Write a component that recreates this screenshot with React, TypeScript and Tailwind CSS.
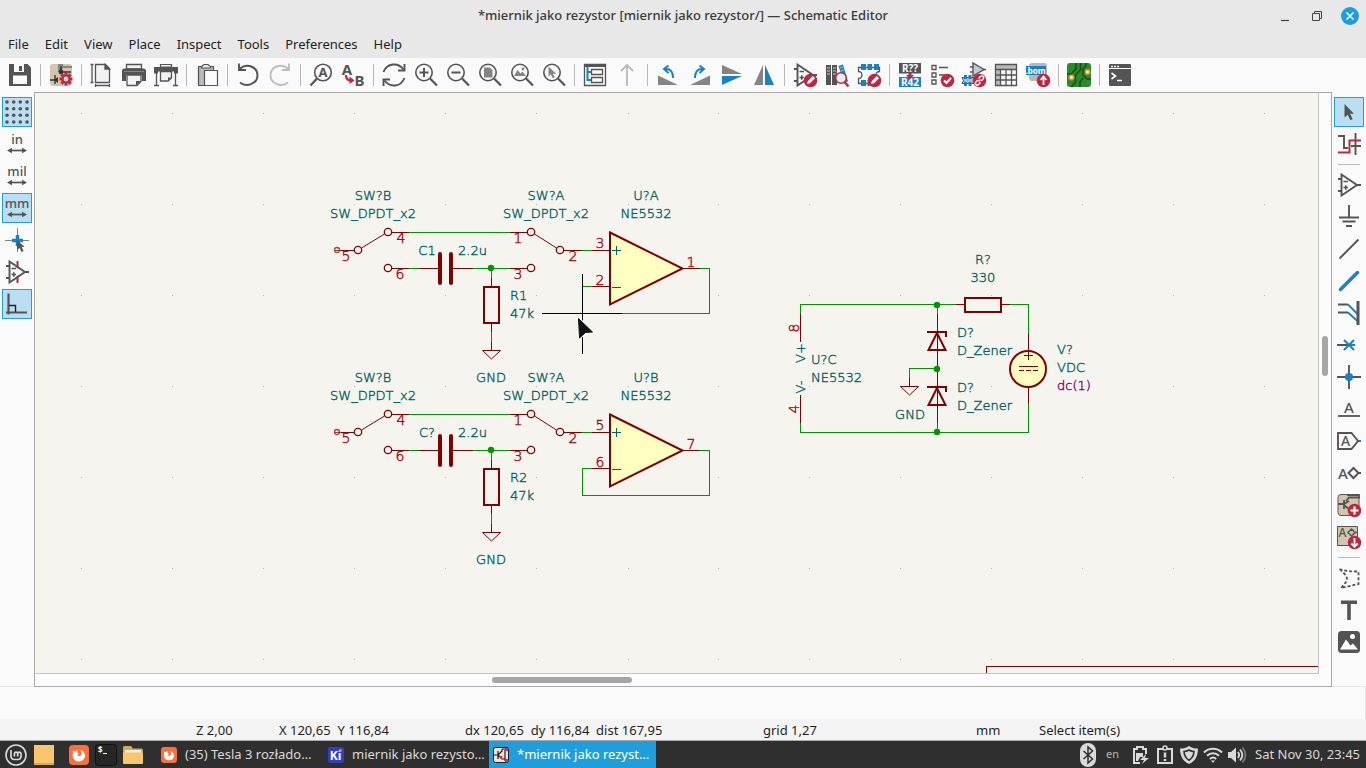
import React from 'react'

const DARK = '#545454'
const BLUE = '#1a81c4'
const RED = '#bf2641'
const GREY = '#b9b9b9'
const MID = '#848484'

type Tool = {
  label: string
  icon: React.ReactNode
  active?: boolean
}

const menus = ['File', 'Edit', 'View', 'Place', 'Inspect', 'Tools', 'Preferences', 'Help']

// === ICON PIECES ===
const Lens = () => (
  <>
    <circle cx="10" cy="9.5" r="8.2" fill="none" stroke={DARK} strokeWidth="1.6" />
    <path d="M16 15.5l7 7" stroke={DARK} strokeWidth="2.2" />
  </>
)

const Badge = ({ children }: { children: React.ReactNode }) => (
  <>
    <circle cx="17.5" cy="17.5" r="6.8" fill={RED} />
    <g fill="none" stroke="#fff" strokeWidth="1.8">{children}</g>
  </>
)

const Pencil = () => (
  <Badge>
    <path d="M14 21l.8-3 5-5 2.200 2.200-5 5z" fill="#fff" stroke="none" />
  </Badge>
)

const OpAmp = () => (
  <g fill="none" stroke={DARK} strokeWidth="1.9">
    <path d="M4.5 1.5v21L20 12z" />
    <path d="M1 6h3.500M1 18h3.500M19.500 12H24" />
    <path d="M6.500 8.500h4.500M6.500 14.500h4.500M8.750 12.200v4.600" strokeWidth="1.600" />
  </g>
)

const Unit = ({ text }: { text: string }) => (
  <>
    <text x="12" y="12" textAnchor="middle" fontSize="13" fontWeight="500" fill={DARK}>{text}</text>
    <path d="M4 18.500h16" stroke={DARK} strokeWidth="1.700" />
    <path d="M2 18.500l5-2.800v5.600zM22 18.500l-5-2.800v5.600z" fill={DARK} />
  </>
)

const gear = (
  <>
    <g stroke={RED} strokeWidth="3">
      <path d="M17 9.500v13M10.500 16h13M12.400 11.400l9.200 9.200M21.600 11.400l-9.200 9.200" />
    </g>
    <circle cx="17" cy="16" r="4.400" fill={RED} />
    <circle cx="17" cy="16" r="2.400" fill="#e6dccb" />
  </>
)

const topGroups: Tool[][] = [
  [
    {
      label: 'Save',
      icon: (
        <>
          <path d="M1 1h18.500L23 4.500V23H1z" fill={DARK} />
          <path d="M6 1h10v8H6z" fill="#fafafa" />
          <path d="M11 3h3v5h-3z" fill={DARK} />
          <path d="M5 12.500h14V21H5z" fill="#fafafa" />
        </>
      ),
    },
  ],
  [
    {
      label: 'Schematic Setup',
      icon: (
        <>
          <rect x="1" y="1" width="22" height="22" rx="3" fill="#d2c5ac" />
          <path d="M9 1h5v2h9v2h-9L12 9H9z" fill={MID} />
          <path d="M12 3v6h10M1 17h8M6 12v9" fill="none" stroke="#333" strokeWidth="1.400" />
          <circle cx="12" cy="9" r="2.400" fill="#333" />
          <path d="M5 17l4-3v6z" fill="#333" />
          {gear}
        </>
      ),
    },
  ],
  [
    {
      label: 'Page Settings',
      icon: (
        <g fill="none" stroke={DARK} strokeWidth="1.300">
          <path d="M5.500 1.500h10l4 4V19.500h-14z" fill="#f3f3f3" />
          <path d="M15 1.500v4.500h4.500z" fill={DARK} />
          <path d="M.500 1.500h3M.500 19.500h3M2 1.500v18M5.500 21v3M19.500 21v3M5.500 22.500h14" />
        </g>
      ),
    },
    {
      label: 'Print',
      icon: (
        <>
          <path d="M4.500 1.500h15V6h-15z" fill="#f3f3f3" stroke={DARK} strokeWidth="1.300" />
          <path d="M2.500 5.500h19a2.500 2.500 0 012.500 2.500v10h-4v-6H4v6H0V8a2.500 2.500 0 012.500-2.500z" fill={DARK} />
          <path d="M2 8.500h20" stroke={MID} />
          <path d="M5 12h14v6.500l-4 4H5z" fill="#f3f3f3" stroke={DARK} strokeWidth="1.300" />
          <path d="M14 22.500V18h5z" fill={DARK} />
        </>
      ),
    },
    {
      label: 'Plot',
      icon: (
        <>
          <path d="M6.500 1.500h11V4h-11z" fill="#f3f3f3" stroke={DARK} strokeWidth="1.200" />
          <path d="M0 4h24v6.500h-4v-2H4v2H0z" fill={DARK} />
          <path d="M2.500 10v12M21.500 10v12M0 22.500h5M19 22.500h5" stroke={DARK} strokeWidth="1.300" />
          <path d="M6.500 8.500h11V15L14 18H6.500z" fill="#f3f3f3" stroke={DARK} strokeWidth="1.300" />
          <path d="M14 18v-3.500h3.500z" fill={DARK} />
        </>
      ),
    },
  ],
  [
    {
      label: 'Paste',
      icon: (
        <g stroke={DARK} strokeWidth="1.200">
          <path d="M3.500 3.500h15v19h-15z" fill={GREY} />
          <path d="M6.500 3.500L9 1.500h4l2.500 2V5h-9z" fill="#e8e8e8" />
          <path d="M9.500 7.500h13v15h-13z" fill="#fafafa" />
        </g>
      ),
    },
  ],
  [
    {
      label: 'Undo',
      icon: (
        <g fill="none" stroke={DARK} strokeWidth="1.900">
          <path d="M3 6.500C11-1 21.500 4 21.500 12.500S10 24.500 4 19.500" />
          <path d="M3 .500v6.500h7" />
        </g>
      ),
    },
    {
      label: 'Redo',
      icon: (
        <g fill="none" stroke="#bdbdbd" strokeWidth="1.900">
          <path d="M21 6.500C13-1 2.500 4 2.500 12.500S14 24.500 20 19.500" />
          <path d="M21 .500v6.500h-7" />
        </g>
      ),
    },
  ],
  [
    {
      label: 'Find',
      icon: (
        <>
          <circle cx="14" cy="9.500" r="8.300" fill="none" stroke={DARK} strokeWidth="1.600" />
          <path d="M8 15.500L1.500 22.500" stroke={DARK} strokeWidth="2.200" />
          <text x="14" y="14" textAnchor="middle" fontSize="13" fontWeight="700" fill={DARK}>A</text>
        </>
      ),
    },
    {
      label: 'Find and Replace',
      icon: (
        <>
          <text x="6" y="11.500" textAnchor="middle" fontSize="15" fontWeight="700" fill={DARK}>A</text>
          <text x="18.500" y="23" textAnchor="middle" fontSize="15" fontWeight="700" fill={DARK}>B</text>
          <path d="M5 12c0 4 2 5.500 5 5.500" fill="none" stroke={RED} strokeWidth="2.200" />
          <path d="M8.500 13.500l5 4-5 3.500z" fill={RED} />
        </>
      ),
    },
  ],
  [
    {
      label: 'Refresh',
      icon: (
        <g fill="none" stroke={DARK} strokeWidth="1.900">
          <path d="M1.500 9C5 0 16-1 21.500 6.500M22.500 15C19 24 8 25 2.500 17.500" />
          <path d="M22.500 1v6.500H16M1.500 23v-6.500H8" />
        </g>
      ),
    },
    { label: 'Zoom In', icon: <><Lens /><path d="M5.500 9.500h9M10 5v9" stroke={DARK} strokeWidth="2" /></> },
    { label: 'Zoom Out', icon: <><Lens /><path d="M5.500 9.500h9" stroke={DARK} strokeWidth="2" /></> },
    { label: 'Zoom to Fit', icon: <><Lens /><path d="M6 4.500h6l2.500 2.500v7.500H6z" fill={MID} /></> },
    {
      label: 'Zoom to Objects',
      icon: <><Lens /><path d="M4 13l3.500-6 3 3.500 2-2L16 13z" fill={MID} /><circle cx="13" cy="6" r="1.400" fill={MID} /></>,
    },
    { label: 'Zoom to Selection', icon: <><Lens /><path d="M6.500 3.500v10l2.400-2.200 1.800 4 2-1-1.800-3.600h3.200z" fill={MID} /></> },
  ],
  [
    {
      label: 'Hierarchy Navigator',
      icon: (
        <g fill="none" stroke={DARK} strokeWidth="1.300">
          <path d="M1.500 1.500h21v21h-21z" />
          <path d="M1 2.500h22" strokeWidth="3" />
          <path d="M8.500 6.500h11v5h-11zM8.500 14.500h11v5h-11z" />
          <path d="M4.500 4v13H8M4.500 9H8" stroke={BLUE} strokeWidth="2" />
        </g>
      ),
    },
    {
      label: 'Leave Sheet',
      icon: <path d="M12 23V2.500M6 8l6-6 6 6" fill="none" stroke={GREY} strokeWidth="1.800" />,
    },
  ],
  [
    {
      label: 'Rotate Counterclockwise',
      icon: (
        <>
          <path d="M2 12.500V22h20z" fill={MID} />
          <path d="M9 6c6-.5 8 3 8 9" fill="none" stroke={BLUE} strokeWidth="2" />
          <path d="M12.500 2.500L8 6l4.500 4" fill="none" stroke={BLUE} strokeWidth="2" />
        </>
      ),
    },
    {
      label: 'Rotate Clockwise',
      icon: (
        <>
          <path d="M22 12.500V22H2z" fill={MID} />
          <path d="M15 6c-6-.5-8 3-8 9" fill="none" stroke={BLUE} strokeWidth="2" />
          <path d="M11.500 2.500L16 6l-4.500 4" fill="none" stroke={BLUE} strokeWidth="2" />
        </>
      ),
    },
    { label: 'Mirror Vertically', icon: <><path d="M2 2v9h20z" fill={MID} /><path d="M2 22v-9h20z" fill={BLUE} /></> },
    { label: 'Mirror Horizontally', icon: <><path d="M11 2v20H2z" fill={MID} /><path d="M13 2v20h9z" fill={BLUE} /></> },
  ],
  [
    { label: 'Symbol Editor', icon: <><OpAmp /><Pencil /></> },
    {
      label: 'Symbol Library Browser',
      icon: (
        <>
          <path d="M1 2h5v20H1zM7 2h5v20H7z" fill={DARK} />
          <path d="M2 5h3M8 5h3M2 8h3M8 8h3M2 11h3M8 11h3" stroke="#ccc" />
          <path d="M13.500 3l4.500-1.500 5 17-4 1z" fill={BLUE} />
          <path d="M15 5l3-1M16 8l3-1" stroke="#9cc8e6" />
          <circle cx="16" cy="15" r="5.300" fill="#e4eef5" stroke={RED} strokeWidth="1.500" />
          <path d="M19.500 19l4 4.500" stroke={RED} strokeWidth="2.600" />
        </>
      ),
    },
    {
      label: 'Footprint Editor',
      icon: (
        <>
          <path d="M1.500 4.500h21v4a3.500 3.500 0 000 7v5h-21v-5a3.500 3.500 0 000-7z" fill="none" stroke={DARK} strokeWidth="1.300" />
          <path d="M4 1h5v6H4zM10.500 1h4.500v6h-4.500zM17 1h5v6h-5zM4 17h5v6H4zM10.500 17H15v6h-4.500z" fill={BLUE} />
          <Pencil />
        </>
      ),
    },
  ],
  [
    {
      label: 'Annotate Schematic',
      icon: (
        <>
          <path d="M1 0h22v10.500H1z" fill={DARK} />
          <path d="M1 14h22v10H1z" fill={BLUE} />
          <text x="12" y="9" textAnchor="middle" fontSize="10" fontWeight="700" fill="#fff">R??</text>
          <text x="12" y="23" textAnchor="middle" fontSize="10" fontWeight="700" fill="#fff">R42</text>
          <path d="M10.500 10h3v2h2.500l-4 4.500-4-4.500h2.500z" fill={RED} />
        </>
      ),
    },
    {
      label: 'Electrical Rules Checker',
      icon: (
        <>
          <path d="M2 2.500h4v4H2zM2 10h4v4H2zM2 17h4v4H2zM9 4.500h9M9 12h6" fill="none" stroke={DARK} strokeWidth="1.300" />
          <Badge><path d="M14 17.500l2.500 2.500 4.500-5" strokeWidth="2.200" /></Badge>
        </>
      ),
    },
    {
      label: 'Assign Footprints',
      icon: (
        <>
          <path d="M11 0v13l11-6.500z" fill="#bccbd8" stroke={DARK} strokeWidth="1.400" />
          <path d="M8 4h3M8 9h3M21 6.500h3" stroke={DARK} strokeWidth="1.400" />
          <path d="M0 14.500h15v6H0l1.500-3z" fill={GREY} stroke={DARK} />
          <path d="M2 12h3v4H2zM6.500 12h3v4h-3zM2 19h3v4H2zM6.500 19h3v4h-3z" fill={BLUE} />
          <Badge>
            <path d="M16.500 18.500l2-2M16.500 15.500l2-2a1.800 1.800 0 012.600 2.600l-2 2M18.500 19.500l-2 2a1.800 1.800 0 01-2.600-2.600l2-2" strokeWidth="1.400" />
          </Badge>
        </>
      ),
    },
    {
      label: 'Symbol Fields Table',
      icon: (
        <>
          <path d="M1 1.500h22V7H1zM1 7h5v15.500H1z" fill={GREY} />
          <path d="M1.500 1.500h21v21h-21zM1.500 6.500h21M1.500 12h21M1.500 17h21M6.500 6.500v16M12 6.500v16M17.500 6.500v16" fill="none" stroke={DARK} strokeWidth="1.300" />
        </>
      ),
    },
    {
      label: 'Bill of Materials',
      icon: (
        <>
          <rect x="3" y="0" width="18" height="18" rx="3" fill={GREY} />
          <path d="M0 3h20v9H0z" fill={BLUE} />
          <text x="9.500" y="10.500" textAnchor="middle" fontSize="8" fontWeight="700" fill="#fff">.bom</text>
          <Badge><path d="M17.500 22v-8M14.500 17l3-3.300 3 3.300" /></Badge>
        </>
      ),
    },
  ],
  [
    {
      label: 'Open PCB Editor',
      icon: (
        <>
          <rect width="24" height="24" rx="3" fill="#2b8a2b" />
          <g fill="none" stroke="#145214" strokeWidth="1.600">
            <path d="M9 0v6L4 11H0M13.500 0v7l-5 5v7l-4 5M19 0v3l-3 3v6l4 4h4M13 24v-5l3-4" />
          </g>
          <circle cx="4.500" cy="14.500" r="2.200" fill="#fff" stroke="#f08c1c" strokeWidth="1.600" />
          <circle cx="20.500" cy="9" r="2.200" fill="#fff" stroke="#f08c1c" strokeWidth="1.600" />
        </>
      ),
    },
  ],
  [
    {
      label: 'Scripting Console',
      icon: (
        <>
          <rect x="1" y="1" width="22" height="22" rx="1" fill={DARK} />
          <path d="M1 5.500h22" stroke="#fafafa" />
          <path d="M3 3.500h2M6 3.500h2M9 3.500h2" stroke="#eee" strokeWidth="1.500" />
          <path d="M3.500 10l4 3-4 3M9 17.500h5" fill="none" stroke="#fff" strokeWidth="1.600" />
        </>
      ),
    },
  ],
]

const leftTools: Tool[] = [
  {
    label: 'Show Grid',
    active: true,
    icon: (
      <g fill={DARK}>
        {[2, 8.7, 15.3, 22].map((x) =>
          [2, 8.7, 15.3, 22].map((y) => <circle key={`${x}-${y}`} cx={x} cy={y} r="1.800" />)
        )}
      </g>
    ),
  },
  { label: 'Inches', icon: <Unit text="in" /> },
  { label: 'Mils', icon: <Unit text="mil" /> },
  { label: 'Millimeters', active: true, icon: <Unit text="mm" /> },
  {
    label: 'Full-Window Crosshairs',
    icon: (
      <>
        <path d="M12.500 0v24M0 12.500h24" stroke={MID} />
        <path d="M12.500 7v11M7 12.500h11" stroke={BLUE} strokeWidth="3.500" />
        <path d="M12 12v10l2.600-2 2 4 2-1-2-4h3z" fill={DARK} />
      </>
    ),
  },
  { label: 'Show Hidden Pins', icon: <><path d="M12.500 1v22" stroke={RED} strokeWidth="2" /><path d="M5 4l14 8-14 8z" fill="#fafafa" /><OpAmp /></> },
  {
    label: 'Free Angle Mode',
    active: true,
    icon: (
      <>
        <path d="M3.500 1.500v21M1 20.500h21" stroke={DARK} strokeWidth="2.200" />
        <path d="M4 13.500h6.500V20" fill="none" stroke="#222" strokeWidth="1.400" />
      </>
    ),
  },
]

const rightGroups: Tool[][] = [
  [
    {
      label: 'Select Items',
      active: true,
      icon: <path d="M7.500 4v13.500l3.200-2.700 2.600 5.400 2.400-1.200-2.600-5.200H17z" fill={DARK} />,
    },
    {
      label: 'Highlight Nets',
      icon: (
        <g fill="none" strokeWidth="1.900">
          <path d="M1 4h6v12h4M18.500 1v22M14 14h10" stroke={DARK} />
          <path d="M1 20.500h11.500v-12H24" stroke={RED} strokeWidth="2" />
        </g>
      ),
    },
  ],
  [
    { label: 'Add Symbol', icon: <OpAmp /> },
    { label: 'Add Power', icon: <path d="M12 0v12M2 12.500h20M5.500 16.500h13M9 21h6" stroke={DARK} strokeWidth="1.900" /> },
    { label: 'Draw Wires', icon: <path d="M2.500 21.500l19-19" stroke={DARK} strokeWidth="1.900" /> },
    { label: 'Draw Buses', icon: <path d="M3.500 20.500l17-17" stroke={BLUE} strokeWidth="3.500" strokeLinecap="round" /> },
    {
      label: 'Wire to Bus Entry',
      icon: (
        <g fill="none" strokeWidth="1.900">
          <path d="M1 3.500h10M1 11.500h10" stroke={DARK} />
          <path d="M11 3.500l10 10M11 11.500l10 9" stroke={BLUE} />
          <path d="M21 0v24" stroke={DARK} strokeWidth="3" />
        </g>
      ),
    },
    { label: 'No-Connect Flag', icon: <><path d="M0 12h12" stroke={DARK} strokeWidth="2" /><path d="M7 7l10 10M17 7L7 17M12 12h6" stroke={BLUE} strokeWidth="2" /></> },
    { label: 'Junction', icon: <><path d="M0 12h24M12 0v24" stroke={DARK} strokeWidth="1.900" /><circle cx="12" cy="12" r="4" fill={BLUE} /></> },
    {
      label: 'Net Label',
      icon: <><text x="12" y="16" textAnchor="middle" fontSize="15" fontWeight="500" fill={DARK}>A</text><path d="M1 19h22" stroke={DARK} strokeWidth="1.800" /></>,
    },
    {
      label: 'Global Label',
      icon: (
        <>
          <path d="M21 12h3" stroke={BLUE} strokeWidth="2" />
          <path d="M1 4h13.500l6.500 8-6.500 8H1z" fill="none" stroke={DARK} strokeWidth="1.900" />
          <text x="8.500" y="17" textAnchor="middle" fontSize="14" fontWeight="500" fill={DARK}>A</text>
        </>
      ),
    },
    {
      label: 'Hierarchical Label',
      icon: <><text x="6" y="17.500" textAnchor="middle" fontSize="15" fontWeight="500" fill={DARK}>A</text><path d="M11.500 12l5-5 5 5-5 5zM21.500 12H24" fill="none" stroke={DARK} strokeWidth="2" /></>,
    },
    {
      label: 'Add Sheet',
      icon: (
        <>
          <rect x="1" y="1.500" width="21" height="21" rx="3" fill="#d2c5ac" stroke={DARK} />
          <path d="M10 2h12v2.500H12L9 8M1 11h6M7 7v9M7 11l5-3M7 12l6 5" fill="none" stroke={DARK} strokeWidth="1.800" />
          <Badge><path d="M17.500 13.500v8M13.500 17.500h8" strokeWidth="2.200" /></Badge>
        </>
      ),
    },
    {
      label: 'Import Sheet Pin',
      icon: (
        <>
          <path d="M.500 1.500h20v19H.500z" fill="#d2c5ac" stroke={DARK} />
          <text x="5.500" y="12" textAnchor="middle" fontSize="12" fontWeight="500" fill={DARK}>A</text>
          <path d="M11 7.500l3.500-3.500 3.500 3.500-3.500 3.500zM18 7.500h2.500" fill="none" stroke={DARK} strokeWidth="1.500" />
          <Badge><path d="M17.500 13v8.500M14.300 18.500l3.200 3.200 3.200-3.200" /></Badge>
        </>
      ),
    },
  ],
  [
    {
      label: 'Draw Lines',
      icon: <path d="M2.500 3C8 5 14 5.500 21.500 5.500V18L4 22c4-5 6-6 6-9S6 6 2.500 3z" fill="none" stroke={DARK} strokeWidth="1.800" strokeDasharray="3 2" />,
    },
    { label: 'Add Text', icon: <path d="M4 2.500h16V6h-6.200v16h-3.600V6H4z" fill={DARK} /> },
    {
      label: 'Add Image',
      icon: (
        <>
          <rect x="1" y="1" width="22" height="22" rx="3.500" fill={DARK} />
          <path d="M3 19.500l6-10 4.500 6 2.500-2 5 6z" fill="#fff" />
          <circle cx="15.500" cy="6.500" r="2.500" fill="#fff" />
        </>
      ),
    },
  ],
]

const Icon = ({ children }: { children: React.ReactNode }) => (
  <svg viewBox="0 0 24 24" className="h-6 w-6 shrink-0 overflow-visible" aria-hidden="true">
    {children}
  </svg>
)

const SideButton = ({ tool }: { tool: Tool }) => (
  <button
    type="button"
    aria-label={tool.label}
    className={
      tool.active
        ? 'flex h-[30px] w-[30px] items-center justify-center border border-[#1f9ede] bg-[#bbdff2]'
        : 'flex h-[30px] w-[30px] items-center justify-center'
    }
  >
    <Icon>{tool.icon}</Icon>
  </button>
)

// === SCHEMATIC ===
const SYM = '#840000'
const WIRE = '#009600'
const LABEL = '#006464'
const PIN = '#a90000'

type LabelProps = {
  x: number
  y: number
  fill?: string
  anchor?: 'start' | 'middle'
  turned?: boolean
  children: string
}

const Label = ({ x, y, fill = LABEL, anchor = 'middle', turned, children }: LabelProps) => (
  <text
    x={x}
    y={y}
    fill={fill}
    stroke={fill}
    strokeWidth="0.400"
    textAnchor={anchor}
    transform={turned ? `rotate(-90 ${x} ${y})` : undefined}
  >
    {children}
  </text>
)

// Pin numbers sit a touch larger than the field labels
const PinNo = ({ x, y, turned, children }: LabelProps) => (
  <g className="text-[14px]">
    <Label x={x} y={y} fill={PIN} turned={turned}>{children}</Label>
  </g>
)

type ChannelProps = {
  dy: number
  unit: string
  cap: string
  res: string
  pins: [string, string, string]
}

// One switch + RC + follower channel
const Channel = ({ dy, unit, cap, res, pins }: ChannelProps) => (
  <g transform={`translate(0 ${dy})`}>
    <g fill="none" stroke={WIRE} shapeRendering="crispEdges">
      <path d="M409 232.500h101M409 268.500h10M473 268.500h37M491.500 268v10M491.500 332v10M582 250.500h10" />
      <path d="M700 268.500h9.500v45H582.500v-27h9.500" />
    </g>
    <g fill="none" stroke={SYM} shapeRendering="crispEdges">
      <path d="M392 232.500h17M510 232.500h17M341 250.500h13M392 268.500h17M419 268.500h20M453 268.500h20M510 268.500h17" />
      <path d="M491.500 278v8M491.500 324v8M491.500 342v8M564 250.500h18M592 250.500h17M592 286.500h17M684 268.500h16" />
    </g>
    <path d="M361.500 248L384.500 234M534.500 234L556.500 248M482.500 350.500h18l-9 8.500z" fill="none" stroke={SYM} />
    <g fill="none" stroke={SYM} strokeWidth="1.300">
      <circle cx="388" cy="232" r="3.700" />
      <circle cx="358" cy="250" r="3.700" />
      <circle cx="388" cy="268" r="3.700" />
      <circle cx="531" cy="232" r="3.700" />
      <circle cx="531" cy="268" r="3.700" />
      <circle cx="560" cy="250" r="3.700" />
      <circle cx="337" cy="250" r="2.500" opacity="0.700" />
      <path d="M335 250.500h6" strokeWidth="1" opacity="0.700" />
    </g>
    <path d="M440 254v29M451 254v29" stroke={SYM} strokeWidth="4" strokeLinecap="round" />
    <rect x="484" y="287" width="15" height="36" fill="none" stroke={SYM} strokeWidth="2" />
    <path d="M610 232.500l72.500 36-72.500 36z" fill="#ffffc2" stroke={SYM} strokeWidth="2" />
    <path d="M612 250.500h9M616.500 246v9M612 287.500h9" stroke={LABEL} />
    <circle cx="491" cy="268" r="3.200" fill={WIRE} />

    <Label x={373} y={200}>SW?B</Label>
    <Label x={373} y={218}>SW_DPDT_x2</Label>
    <Label x={546} y={200}>SW?A</Label>
    <Label x={546} y={218}>SW_DPDT_x2</Label>
    <Label x={646} y={200}>{unit}</Label>
    <Label x={646} y={218}>NE5532</Label>
    <Label x={427} y={255}>{cap}</Label>
    <Label x={458} y={255} anchor="start">2.2u</Label>
    <Label x={510} y={300} anchor="start">{res}</Label>
    <Label x={510} y={318} anchor="start">47k</Label>
    <Label x={491} y={382}>GND</Label>

    <PinNo x={401} y={243}>4</PinNo>
    <PinNo x={346} y={261}>5</PinNo>
    <PinNo x={400} y={279}>6</PinNo>
    <PinNo x={518} y={243}>1</PinNo>
    <PinNo x={573} y={261}>2</PinNo>
    <PinNo x={518} y={279}>3</PinNo>
    <PinNo x={600} y={248}>{pins[0]}</PinNo>
    <PinNo x={600} y={285}>{pins[1]}</PinNo>
    <PinNo x={691} y={267}>{pins[2]}</PinNo>
  </g>
)

const Zener = ({ dy }: { dy: number }) => (
  <g transform={`translate(0 ${dy})`}>
    <path d="M927 332h19v5M937 333l-8.500 17h17z" fill="none" stroke={SYM} strokeWidth="2" />
    <Label x={957} y={337} anchor="start">D?</Label>
    <Label x={957} y={355} anchor="start">D_Zener</Label>
  </g>
)

const gridX = [81, 172, 263, 354, 445, 536, 628, 718, 809, 900, 991, 1082, 1173, 1264]
const gridY = [113, 204, 295, 386, 477, 568, 659]

const Schematic = () => (
  <svg
    className="block h-full w-full text-[13px] font-extralight [font-family:'DejaVu_Sans',sans-serif]"
    role="img"
    aria-label="Schematic sheet"
  >
    <g transform="translate(-35 -93)">
      <g fill="#b4b4b0">
        {gridX.map((x) => gridY.map((y) => <rect key={`${x}-${y}`} x={x} y={y} width="1" height="1" />))}
      </g>

      <Channel dy={0} unit="U?A" cap="C1" res="R1" pins={['3', '2', '1']} />
      <Channel dy={182} unit="U?B" cap="C?" res="R2" pins={['5', '6', '7']} />

      {/* Supply */}
      <g fill="none" stroke={WIRE} shapeRendering="crispEdges">
        <path d="M800.500 314v-9.500H956M1010 304.500h18.500V333M1028.500 404v28.500H800.500V423" />
        <path d="M937.500 305v9M937.500 423v9M937 368.500h-27.500V378" />
      </g>
      <g fill="none" stroke={SYM} shapeRendering="crispEdges">
        <path d="M800.500 314v28M800.500 395v28M956 304.500h8M1002 304.500h8M1028.500 333v18M1028.500 387v17M937.500 314v109" />
        <path d="M909.500 378v8" />
      </g>
      <path d="M900.500 386.500h18l-9 8.500z" fill="none" stroke={SYM} />
      <rect x="965" y="298" width="36" height="14" fill="none" stroke={SYM} strokeWidth="2" />
      <Zener dy={0} />
      <Zener dy={55} />
      <circle cx="1028" cy="369" r="18" fill="#ffffc2" stroke={SYM} strokeWidth="2" />
      <path d="M1024 355.500h9M1028.500 350v10M1019 366.500h19M1019 370.500h5M1026 370.500h5M1033 370.500h5" stroke={SYM} />
      <g fill={WIRE}>
        <circle cx="937" cy="305" r="3.200" />
        <circle cx="937" cy="369" r="3.200" />
        <circle cx="937" cy="432" r="3.200" />
      </g>
      <Label x={983} y={264}>R?</Label>
      <Label x={983} y={282}>330</Label>
      <Label x={811} y={364} anchor="start">U?C</Label>
      <Label x={811} y={382} anchor="start">NE5532</Label>
      <Label x={1057} y={354} anchor="start">V?</Label>
      <Label x={1057} y={372} anchor="start">VDC</Label>
      <Label x={1057} y={390} anchor="start" fill="#7f007f">dc(1)</Label>
      <Label x={910} y={419}>GND</Label>
      <PinNo x={799} y={328} turned>8</PinNo>
      <PinNo x={799} y={409} turned>4</PinNo>
      <Label x={805} y={353} turned>V+</Label>
      <Label x={805} y={387} turned>V-</Label>

      {/* Sheet frame corner */}
      <path d="M986.500 4000V666.500H6000" fill="none" stroke={SYM} shapeRendering="crispEdges" />

      {/* Crosshair and pointer */}
      <path d="M542 313.500h80M582.500 274v80" stroke="#000" shapeRendering="crispEdges" />
      <path d="M578.500 318.500l14 13.500-7 .500-6 5.500z" fill="#111" stroke="#fff" strokeWidth="3" strokeLinejoin="round" />
      <path d="M578.500 318.500l14 13.500-7 .500-6 5.500z" fill="#111" stroke="#111" strokeLinejoin="round" />
    </g>
  </svg>
)

const Firefox = ({ className }: { className: string }) => (
  <svg viewBox="0 0 20 20" className={className} aria-hidden="true">
    <rect width="20" height="20" rx="4" fill="#f9703c" />
    <path d="M4 5.500c.8.200 1.400.6 2 1.200 1-1 2.200-1.400 3-1.400-1 .8-1.300 1.500-1 2.200l2 .8c-.4 1-1.300 1.200-1.800 1.500.3 1.500 3.500 1.800 4.300-.3.500-1.800-.5-3-1-4.500 3 1 5 3.300 4.700 6.200A6.300 6.300 0 013.700 11c0-2 .6-3.500.3-5.500z" fill="#fff" />
  </svg>
)

const tasks = [
  { label: '(35) Tesla 3 rozłado…', icon: <Firefox className="h-4 w-4 shrink-0" />, active: false },
  {
    label: 'miernik jako rezysto…',
    icon: (
      <svg viewBox="0 0 16 16" className="h-4 w-4 shrink-0" aria-hidden="true">
        <rect width="16" height="16" rx="2" fill="#2f3fc4" />
        <text x="7.500" y="12.500" textAnchor="middle" fontSize="12" fontWeight="700" fill="#fff">Ki</text>
        <circle cx="12.500" cy="3.500" r="1.400" fill="#f08030" />
      </svg>
    ),
    active: false,
  },
  {
    label: '*miernik jako rezyst…',
    icon: (
      <svg viewBox="0 0 16 16" className="h-4 w-4 shrink-0" aria-hidden="true">
        <rect x=".500" y=".500" width="15" height="15" rx="2" fill="#efe3d3" stroke="#222" />
        <path d="M1 8h4M5 4v8M5 8l4-4V2M5 8l4 4h3M9 2h4M12 3v11" fill="none" stroke="#222" strokeWidth="1.200" />
        <path d="M12 1h3v3h-3zM12 12h3v3h-3zM6 9l3.500 0-1 3.500z" fill="#e0245e" />
      </svg>
    ),
    active: true,
  },
]

export default function App() {
  return (
    <div className="flex h-screen min-w-0 flex-col overflow-hidden bg-[#fafafa] text-[13px] text-[#1f1f1f] [font-family:'Noto_Sans',sans-serif]">
      {/* Title bar */}
      <header className="grid h-[30px] shrink-0 grid-cols-[1fr_auto_1fr] items-center bg-[#e8e8e8] pt-0.5">
        <h1 className="col-start-2 text-[13px] font-medium text-[#3a3a3a]">
          *miernik jako rezystor [miernik jako rezystor/] — Schematic Editor
        </h1>
        <div className="flex items-center justify-end gap-4 pr-[7px]">
          <button type="button" aria-label="Minimize" className="h-4 w-4">
            <svg viewBox="0 0 16 16"><path d="M4 12.500h8" stroke="#444" strokeWidth="1.200" /></svg>
          </button>
          <button type="button" aria-label="Restore" className="h-4 w-4">
            <svg viewBox="0 0 16 16" fill="none" stroke="#444"><path d="M3.500 5.500h7v7h-7zM5.500 5.500v-2h7v7h-2" /></svg>
          </button>
          <button type="button" aria-label="Close" className="h-[18px] w-[18px]">
            <svg viewBox="0 0 18 18">
              <circle cx="9" cy="9" r="9" fill="#1f9ede" />
              <path d="M5.500 5.500l7 7M12.500 5.500l-7 7" stroke="#fff" strokeWidth="1.500" />
            </svg>
          </button>
        </div>
      </header>

      {/* Menu bar */}
      <nav className="flex h-7 shrink-0 items-center bg-[#e8e8e8] pt-0.5">
        {menus.map((name) => (
          <button key={name} type="button" className="px-2">
            {name}
          </button>
        ))}
      </nav>

      {/* Main toolbar */}
      <div className="flex h-[34px] shrink-0 items-center px-1" role="toolbar">
        {topGroups.map((group, i) => (
          <React.Fragment key={group[0].label}>
            {i > 0 && (
              <div className="flex w-[9px] shrink-0 justify-center">
                <div className="h-[22px] w-px bg-[#b9b9b9]" />
              </div>
            )}
            {group.map((tool) => (
              <button key={tool.label} type="button" aria-label={tool.label} className="flex h-8 w-8 shrink-0 items-center justify-center">
                <Icon>{tool.icon}</Icon>
              </button>
            ))}
          </React.Fragment>
        ))}
      </div>

      {/* Workspace */}
      <main className="flex min-h-0 flex-1">
        <div className="flex w-[34px] shrink-0 flex-col items-center gap-0.5 border-b border-[#e4e4e4] pt-[5px]" role="toolbar">
          {leftTools.map((tool) => (
            <SideButton key={tool.label} tool={tool} />
          ))}
        </div>

        <div className="grid min-w-0 flex-1 grid-cols-[minmax(0,1fr)_12px] grid-rows-[minmax(0,1fr)_12px] border border-[#a9a9a9] bg-[#fcfcfc]">
          <div className="overflow-hidden border-r border-b border-[#c4c4c4] bg-[#f5f4ef]">
            <Schematic />
          </div>
          <div className="flex flex-col items-center">
            <div className="grow-[243]" />
            <div className="h-10 w-1.5 rounded-full bg-[#a6a6a6]" />
            <div className="grow-[298]" />
          </div>
          <div className="flex items-center">
            <div className="grow-[457]" />
            <div className="h-1.5 w-[140px] rounded-full bg-[#a6a6a6]" />
            <div className="grow-[687]" />
          </div>
        </div>

        <div className="flex w-[34px] shrink-0 flex-col items-center gap-0.5 border-b border-[#e4e4e4] pt-[5px]" role="toolbar">
          {rightGroups.map((group, i) => (
            <React.Fragment key={group[0].label}>
              {i > 0 && <div className="my-[3px] h-px w-[22px] shrink-0 bg-[#b9b9b9]" />}
              {group.map((tool) => (
                <SideButton key={tool.label} tool={tool} />
              ))}
            </React.Fragment>
          ))}
        </div>
      </main>

      {/* Message panel */}
      <div className="h-8 shrink-0 border-r border-[#e4e4e4]" />

      {/* Status bar */}
      <footer className="flex h-[22px] shrink-0 items-center border-b border-[#a9a9a9] bg-[#f4f4f4] pt-0.5 pl-[196px] whitespace-pre">
        <span className="w-[83px]">Z 2,00</span>
        <span className="w-[186px]">X 120,65  Y 116,84</span>
        <span className="w-[298px]">dx 120,65  dy 116,84  dist 167,95</span>
        <span className="w-[213px]">grid 1,27</span>
        <span className="w-[63px]">mm</span>
        <span>Select item(s)</span>
      </footer>

      {/* Desktop panel */}
      <div className="flex h-[27px] shrink-0 items-center bg-[#2f2f2f] text-[#dadada]">
        <div className="flex w-[155px] shrink-0 items-center pl-[5px]">
          <button type="button" aria-label="Menu">
            <svg viewBox="0 0 22 22" className="h-[22px] w-[22px]" fill="none" stroke="#dadada">
              <circle cx="11" cy="11" r="10" strokeWidth="1.600" />
              <path d="M6 6v6.500a3 3 0 003 3h4a3 3 0 003-3V9.500a1.700 1.700 0 00-3.300 0v3M12.700 9.500a1.700 1.700 0 00-3.300 0v3" strokeWidth="1.700" />
            </svg>
          </button>
          <button type="button" aria-label="Show desktop" className="ml-[7px] h-5 w-5 border-b-2 border-[#d9a951] bg-[#f9c56f]" />
          <button type="button" aria-label="Firefox" className="ml-[15px]">
            <Firefox className="h-5 w-5" />
          </button>
          <button type="button" aria-label="Terminal" className="ml-1.5">
            <svg viewBox="0 0 22 22" className="h-[22px] w-[22px]">
              <rect x=".500" y=".500" width="21" height="21" rx="3" fill="#262626" stroke="#111" />
              <text x="3" y="9" fontSize="8" fontWeight="700" fill="#fff">$</text>
              <path d="M8 9.500h4" stroke="#fff" />
            </svg>
          </button>
          <button type="button" aria-label="Files" className="ml-1.5">
            <svg viewBox="0 0 20 20" className="h-5 w-5">
              <path d="M0 2.500A1.500 1.500 0 011.500 1H8l2 2.500h8.500A1.500 1.500 0 0120 5v13H0z" fill="#d9a951" />
              <path d="M2 5h16v4H2z" fill="#f5f0e6" />
              <path d="M0 7.500h20V18a1 1 0 01-1 1H1a1 1 0 01-1-1z" fill="#f9c56f" />
            </svg>
          </button>
        </div>
        {tasks.map((task) => (
          <button
            key={task.label}
            type="button"
            className={
              task.active
                ? 'flex h-full w-[167px] shrink-0 items-center gap-2 bg-[#1f9ede] pl-1 text-white'
                : 'flex h-full w-[167px] shrink-0 items-center gap-2 pl-1.5'
            }
          >
            {task.icon}
            <span className="whitespace-nowrap">{task.label}</span>
          </button>
        ))}
        <div className="ml-auto flex items-center pr-1.5">
          <svg viewBox="0 0 16 24" className="h-6 w-4" aria-hidden="true">
            <rect width="16" height="24" rx="8" fill="#dadada" />
            <path d="M3.500 8l9 8L8 20V4l4.500 4-9 8" fill="none" stroke="#2f2f2f" strokeWidth="1.500" />
          </svg>
          <span className="ml-2.5 text-[11px] text-[#b5b5b5]">en</span>
          <div className="ml-3 flex items-center gap-1">
            <svg viewBox="0 0 20 20" className="h-5 w-5" fill="none" stroke="#dadada" strokeWidth="2" aria-hidden="true">
              <path d="M9 18H3V4h3V2h6v2h3v5" />
              <path d="M5 8h7v4H9l-2 4H5z" fill="#dadada" stroke="none" />
              <path d="M15 9l-6 6h4l-2 4 7-6h-4z" fill="#dadada" stroke="none" />
            </svg>
            <svg viewBox="0 0 20 20" className="h-5 w-5" fill="none" stroke="#dadada" strokeWidth="2" aria-hidden="true">
              <path d="M3 4h14v14H3z" />
              <circle cx="10" cy="3" r="2" fill="#2f2f2f" strokeWidth="1.500" />
              <path d="M10 7.500v5M10 14v2" strokeWidth="2.500" />
            </svg>
            <svg viewBox="0 0 20 20" className="h-5 w-5" aria-hidden="true">
              <path d="M10 1c3 2 5 2.500 9 2.500C19 11 16 16.500 10 19 4 16.500 1 11 1 3.500 5 3.500 7 3 10 1z" fill="#dadada" />
              <path d="M10 5c1.800 1 3 1.400 5 1.500-.3 4-2 7-5 8.700C7 13.500 5.300 10.500 5 6.500 7 6.400 8.200 6 10 5z" fill="#dadada" stroke="#2f2f2f" strokeWidth="1.600" />
            </svg>
            <svg viewBox="0 0 20 20" className="h-5 w-5" fill="none" stroke="#dadada" strokeWidth="2" aria-hidden="true">
              <path d="M1 7.500C6 2.500 14 2.500 19 7.500M4 10.800c3.500-3.300 8.500-3.300 12 0M6.800 14c2-1.800 4.400-1.800 6.400 0" />
              <path d="M8 15.500h4L10 18z" fill="#dadada" stroke="none" />
            </svg>
            <svg viewBox="0 0 20 20" className="h-5 w-5" fill="none" stroke="#dadada" strokeWidth="1.800" aria-hidden="true">
              <path d="M1 7h3l5-4.500v15L4 13H1z" fill="#dadada" stroke="none" />
              <path d="M11 7c1.500 2 1.500 4 0 6M13 4.500c3 3.500 3 7.500 0 11" />
              <path d="M15.500 2.500c4 5 4 10 0 15" stroke="#777" />
            </svg>
          </div>
          <time className="ml-2 whitespace-nowrap">Sat Nov 30, 23:45</time>
        </div>
      </div>
    </div>
  )
}
